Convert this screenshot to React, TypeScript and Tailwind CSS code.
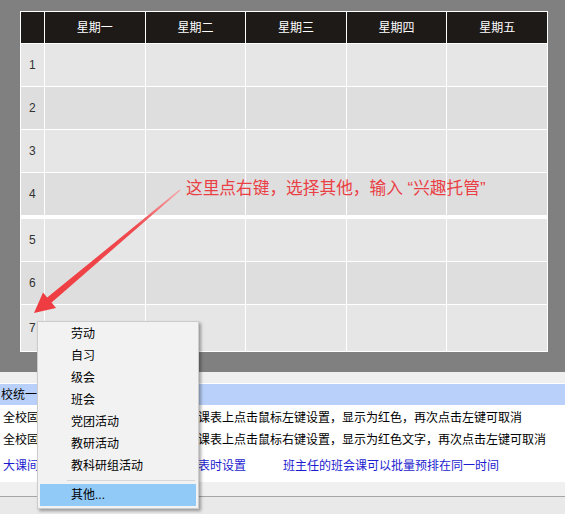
import React from 'react';

const days = ['星期一', '星期二', '星期三', '星期四', '星期五'];
const rows = [1, 2, 3, 4, 5, 6, 7];
const menuItems = ['劳动', '自习', '级会', '班会', '党团活动', '教研活动', '教科研组活动'];

function TableRow({ n }: { n: number }) {
  const bg = n % 2 === 1 ? 'bg-[#e6e6e6]' : 'bg-[#dedede]';
  return (
    <div className={`grid grid-cols-[23px_repeat(5,1fr)] gap-px ${n === 7 ? 'h-[46px]' : 'h-[42px]'} ${n === 5 ? 'mt-[3px]' : ''}`}>
      <div className={`${bg} flex items-center pl-[8px] text-[12px] text-[#333]`}>{n}</div>
      {days.map((d) => (
        <div key={d} className={bg} />
      ))}
    </div>
  );
}

export default function App() {
  return (
    <div className="relative w-[565px] h-[514px] overflow-hidden bg-[#ececec] font-['Liberation_Sans','Noto_Sans_CJK_SC',sans-serif] text-[12px] text-black">
      {/* timetable area */}
      <div className="h-[372px] bg-[#808080] pt-[11px] pl-[20px]">
        <div className="w-[528px] border border-white bg-white flex flex-col gap-px">
          <div className="grid grid-cols-[23px_repeat(5,1fr)] gap-px h-[31px]">
            <div className="bg-[#1e1a18]" />
            {days.map((d) => (
              <div key={d} className="bg-[#1e1a18] text-white flex items-center justify-center pt-px text-[12px]">
                {d}
              </div>
            ))}
          </div>
          {rows.map((n) => (
            <TableRow key={n} n={n} />
          ))}
        </div>
      </div>

      <div className="h-[12px] bg-[#efefef] border-b border-white" />
      <div className="h-[21px] bg-[#b9d1fa] flex items-center pl-[1px] whitespace-nowrap">校统一</div>

      <div className="h-[77px] bg-white pt-[2px] whitespace-nowrap">
        <div className="flex h-[22px] items-center">
          <span className="w-[198px] pl-[3px] overflow-hidden">全校固</span>
          <span>课表上点击鼠标左键设置，显示为红色，再次点击左键可取消</span>
        </div>
        <div className="flex h-[22px] items-center">
          <span className="w-[198px] pl-[3px] overflow-hidden">全校固</span>
          <span>课表上点击鼠标右键设置，显示为红色文字，再次点击左键可取消</span>
        </div>
        <div className="flex h-[22px] items-center mt-[4px] text-[#1c1ccf]">
          <span className="w-[198px] pl-[3px] overflow-hidden">大课间</span>
          <span>表时设置</span>
          <span className="ml-[37px]">班主任的班会课可以批量预排在同一时间</span>
        </div>
      </div>

      <div className="h-[15px] bg-[#f0f0f0] border-b border-[#a6a6a6]" />
      <div className="h-[17px] bg-[#e9e9e9]" />

      {/* annotation */}
      <div className="absolute left-[186px] top-[178px] text-[16.7px] leading-[22px] text-[#ea3f45] whitespace-nowrap">
        这里点右键，选择其他，输入 “兴趣托管”
      </div>
      <svg className="absolute left-0 top-0 pointer-events-none" width="565" height="514" viewBox="0 0 565 514">
        <defs>
          <linearGradient id="arr" x1="180" y1="190" x2="34" y2="313" gradientUnits="userSpaceOnUse">
            <stop offset="0" stopColor="#f6a5a8" />
            <stop offset="0.3" stopColor="#ef4a4f" />
            <stop offset="1" stopColor="#ee3b40" />
          </linearGradient>
        </defs>
        <polygon
          points="180.4,190.4 51.6,302.6 56,308 34,313 43,292.6 47.2,297.6 179.6,189.6"
          fill="url(#arr)"
        />
      </svg>

      {/* context menu */}
      <div className="absolute left-[37px] top-[321px] w-[162px] h-[188px] bg-[#f2f2f2] border border-[#cccccc] shadow-[2px_2px_3px_rgba(0,0,0,0.35)] pt-[1px]">
        {menuItems.map((m) => (
          <div key={m} className="h-[22px] flex items-center pl-[33px] whitespace-nowrap">
            {m}
          </div>
        ))}
        <div className="ml-[29px] mr-[3px] my-[3px] h-px bg-[#d7d7d7]" />
        <div className="mx-[2px] h-[22px] bg-[#91c9f7] flex items-center pl-[31px]">其他...</div>
      </div>
    </div>
  );
}
